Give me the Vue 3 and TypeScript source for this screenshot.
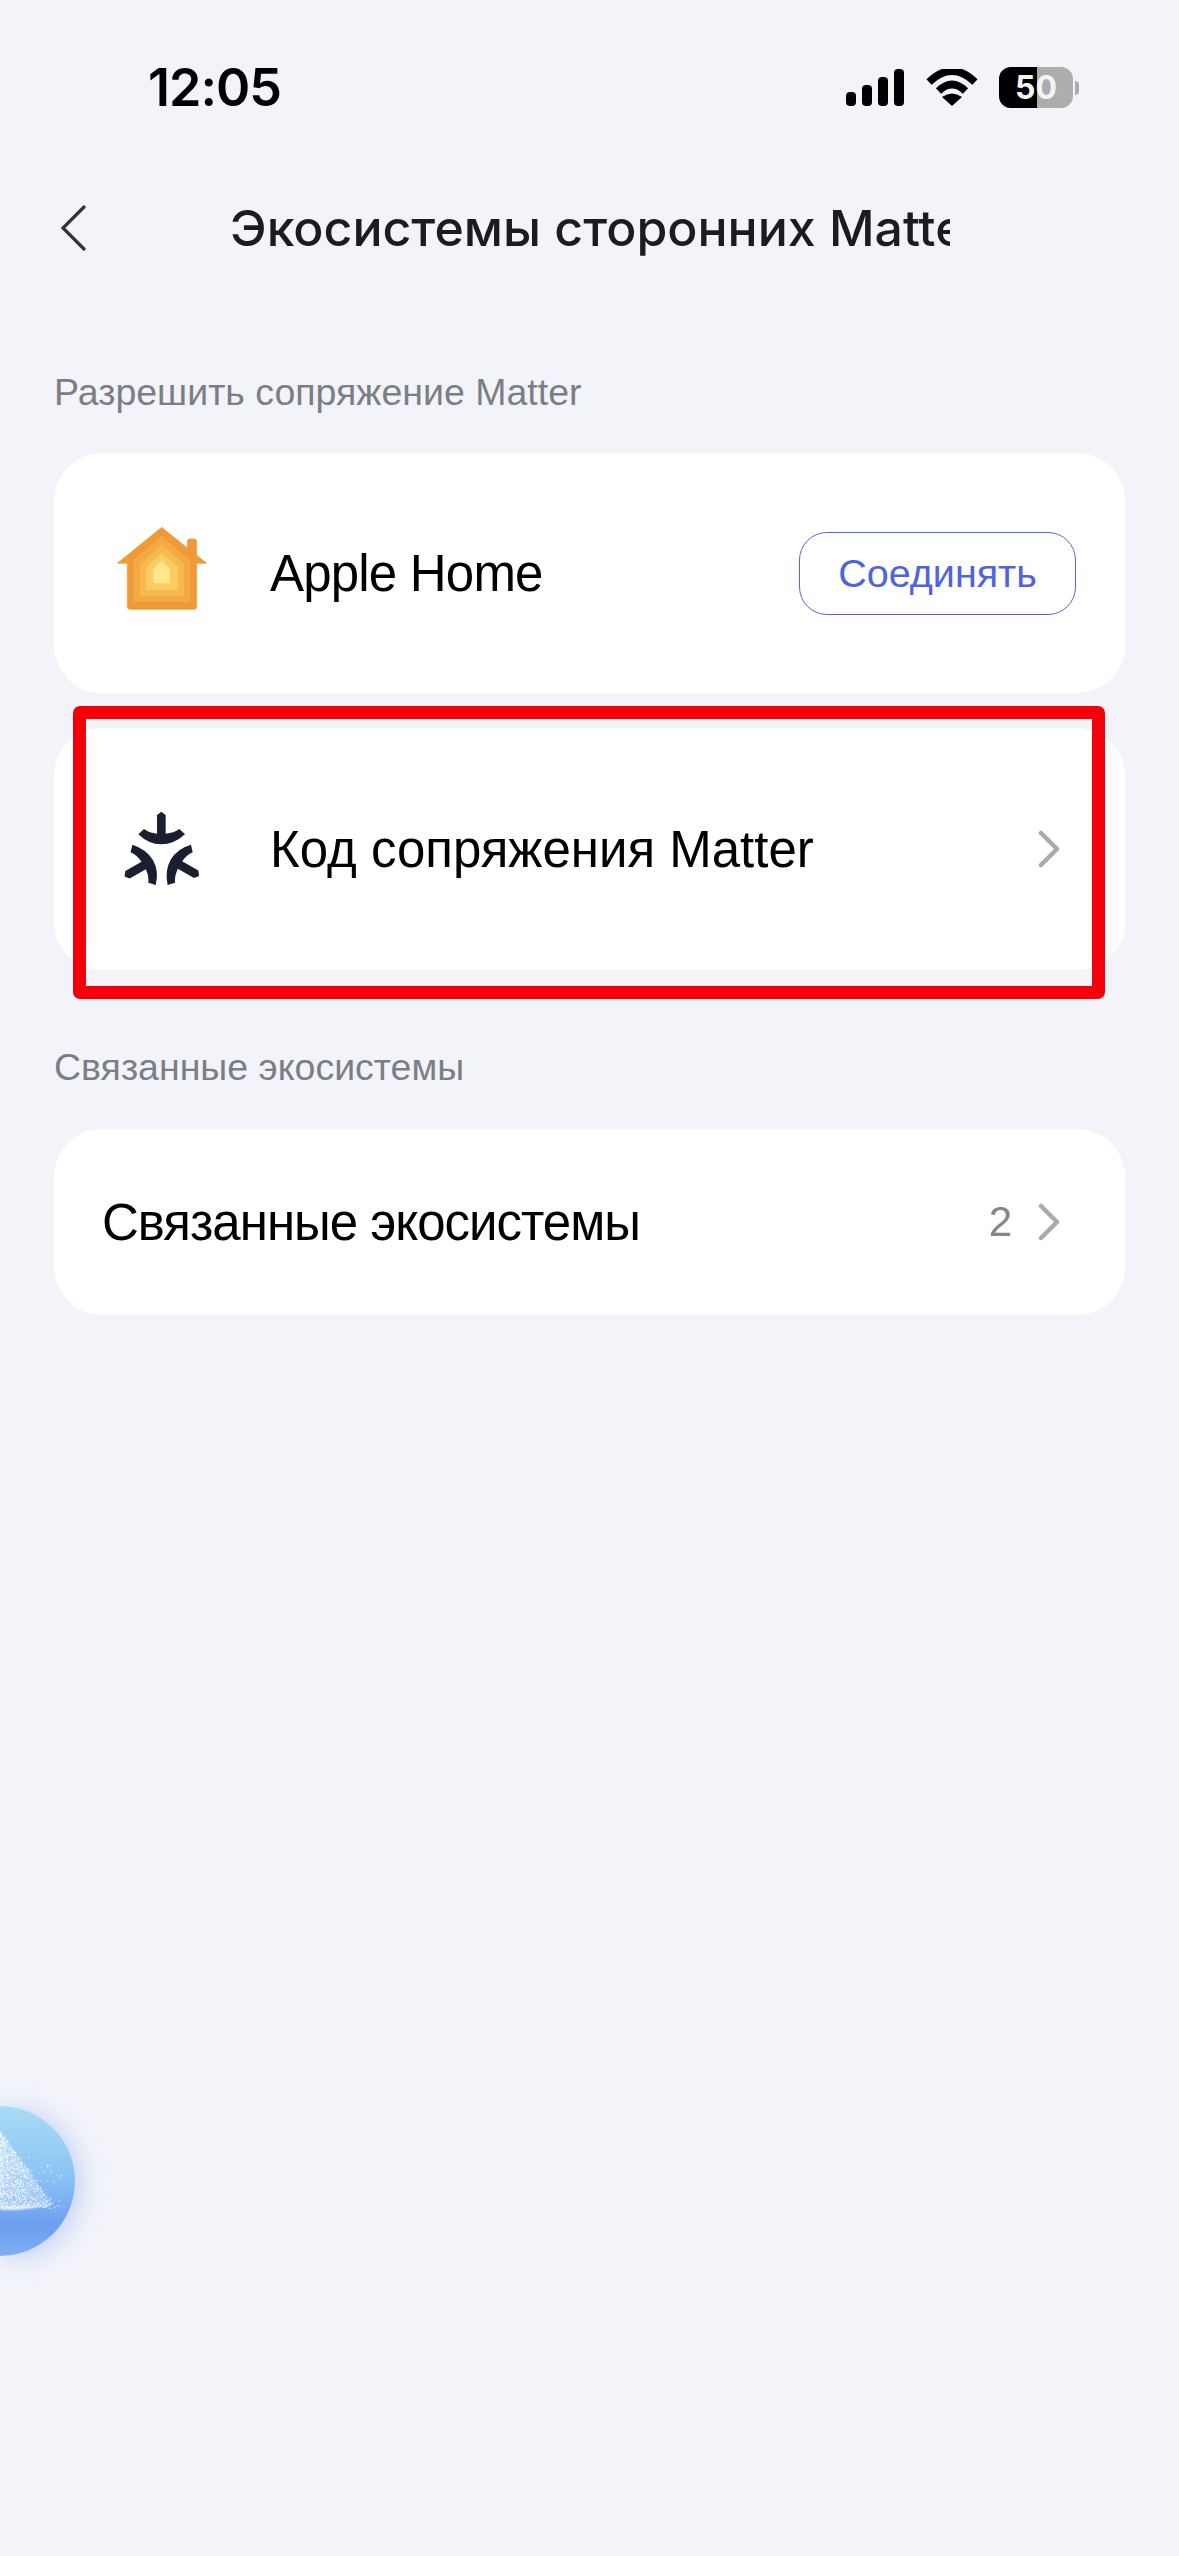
<template>
  <div class="page">
    <div class="status-bar">
      <span class="time">12:05</span>
      <div class="status-icons">
        <svg class="signal" width="58" height="37" viewBox="0 0 58 37">
          <rect x="0" y="23" width="10" height="14" rx="4" />
          <rect x="16" y="16" width="10" height="21" rx="4" />
          <rect x="32" y="8" width="10" height="29" rx="4" />
          <rect x="48" y="0" width="10" height="37" rx="4" />
        </svg>
        <svg class="wifi" width="52" height="37" viewBox="0 0 52 37">
          <path d="M3 13 Q26 -9 49 13" fill="none" stroke="#000" stroke-width="7.5" />
          <path d="M12.5 22 Q26 9 39.5 22" fill="none" stroke="#000" stroke-width="7.5" />
          <path d="M26 37 L16 28 Q26 21 36 28 Z" fill="#000" />
        </svg>
        <div class="battery">
          <div class="battery-body">
            <div class="battery-fill"></div>
            <span class="battery-text">50</span>
          </div>
          <div class="battery-nub"></div>
        </div>
      </div>
    </div>

    <div class="nav-bar">
      <svg class="back" width="26" height="46" viewBox="0 0 26 46">
        <path d="M24 2 L3 23 L24 44" fill="none" stroke="#33343a" stroke-width="3.2" stroke-linecap="round" />
      </svg>
      <div class="title">Экосистемы сторонних Matter</div>
    </div>

    <div class="section-label first">Разрешить сопряжение Matter</div>

    <div class="card row-tall">
      <svg class="row-icon home" width="150" height="110" viewBox="0 0 450 330">
        <path d="M215 52 L292 114 L292 94 Q292 87 299 87 L313 87 Q320 87 320 94 L320 136 L350 160 L320 160 L320 290 Q320 298 312 298 L120 298 Q112 298 112 290 L112 160 L82 160 Z" fill="#f09a37" stroke="#f09a37" stroke-width="2" stroke-linejoin="round" />
        <path d="M215 78 L300 150 L300 276 L130 276 L130 150 Z" fill="#f4a942" />
        <path d="M215 103 L282 162 L282 258 L150 258 L150 162 Z" fill="#f6b94e" />
        <path d="M215 128 L264 172 L264 240 L168 240 L168 172 Z" fill="#f9cc63" />
        <path d="M215 152 L240 176 L240 220 L190 220 L190 176 Z" fill="#fde788" />
      </svg>
      <span class="row-text apple">Apple Home</span>
      <button class="connect">Соединять</button>
    </div>

    <div class="card row-tall second">
      <svg class="row-icon matter" width="150" height="110" viewBox="0 0 450 330">
        <g v-for="angle in [0, 120, 240]" :key="angle" :transform="`rotate(${angle} 215 191)`">
          <path d="M201 72 L214 62 L227 72 L227 128 Q252 126 268 114 L285 130 Q252 160 214 160 Q176 160 145 130 L162 114 Q178 126 201 128 Z" fill="#1a1f30" />
        </g>
      </svg>
      <span class="row-text">Код сопряжения Matter</span>
      <svg class="chevron" width="22" height="38" viewBox="0 0 22 38">
        <path d="M3 3 L19 19 L3 35" fill="none" stroke="#a9a9ae" stroke-width="4.5" stroke-linecap="round" stroke-linejoin="round" />
      </svg>
      <div class="highlight"></div>
    </div>

    <div class="section-label">Связанные экосистемы</div>

    <div class="card row-short">
      <span class="row-text plain">Связанные экосистемы</span>
      <span class="count">2</span>
      <svg class="chevron" width="22" height="38" viewBox="0 0 22 38">
        <path d="M3 3 L19 19 L3 35" fill="none" stroke="#a9a9ae" stroke-width="4.5" stroke-linecap="round" stroke-linejoin="round" />
      </svg>
    </div>

    <div class="orb">
      <svg width="75" height="150" viewBox="0 0 75 150">
        <defs>
          <filter id="soft"><feGaussianBlur stdDeviation="1" /></filter>
        </defs>
        <path d="M0 24 L52 98 Q30 103 0 102 Z" fill="#fff" opacity="0.28" filter="url(#soft)" />
        <path d="M0 100 Q30 101 52 97 Q30 105 0 104 Z" fill="#fff" opacity="0.8" filter="url(#soft)" />
        <circle v-for="(d, i) in specks" :key="i" :cx="d.x" :cy="d.y" :r="d.r" fill="#fff" :opacity="d.o" />
      </svg>
    </div>
  </div>
</template>

<script setup lang="ts">
// seeded so the specks on the orb stay put between runs
let seed = 7;
const rnd = () => {
  seed = (seed * 16807) % 2147483647;
  return seed / 2147483647;
};

const inside = Array.from({ length: 1100 }, () => {
  const x = rnd() * rnd() * 54;
  const top = 24 + x * 1.42;
  const y = top + rnd() * (102 - top);
  return { x, y, r: 0.3 + rnd() * 0.5, o: 0.55 + rnd() * 0.45 };
});

// loose grains thrown off past the triangle's right edge
const loose = Array.from({ length: 110 }, () => {
  const x = 12 + rnd() * 52;
  const y = 34 + x * 0.5 + rnd() * 46;
  return { x, y, r: 0.3 + rnd() * 0.5, o: 0.4 + rnd() * 0.5 };
});

const specks = [...inside, ...loose];
</script>

<style scoped>
.page {
  position: relative;
  width: 1179px;
  height: 2556px;
  overflow: hidden;
  box-sizing: border-box;
  padding: 0 54px;
  background: #f2f4f9;
  font-family: "Liberation Sans", Arial, sans-serif;
  color: #000;
}

.status-bar {
  display: flex;
  align-items: center;
  justify-content: space-between;
  height: 41px;
  padding: 67px 46px 0 94px;
}

.time {
  font-size: 52px;
  font-weight: 600;
  font-family: Inter, sans-serif;
  letter-spacing: -1px;
  color: #000;
}

.status-icons {
  display: flex;
  align-items: center;
}

.wifi {
  margin-left: 22px;
}

.battery {
  display: flex;
  align-items: center;
  margin-left: 21px;
}

.battery-body {
  position: relative;
  display: flex;
  align-items: center;
  justify-content: center;
  width: 74px;
  height: 41px;
  border-radius: 12px;
  overflow: hidden;
  background: #adadad;
}

.battery-fill {
  position: absolute;
  left: 0;
  top: 0;
  bottom: 0;
  width: 38px;
  background: #000;
}

.battery-text {
  position: relative;
  font-family: Inter, sans-serif;
  font-size: 32px;
  font-weight: 700;
  color: #f4f4f4;
}

.battery-nub {
  width: 4px;
  height: 14px;
  margin-left: 2px;
  border-radius: 0 4px 4px 0;
  background: #adadad;
}

.nav-bar {
  display: flex;
  align-items: center;
  height: 60px;
  margin-top: 90px;
  padding-left: 6px;
}

.title {
  width: 720px;
  margin-left: 144px;
  overflow: hidden;
  white-space: nowrap;
  font-family: Inter, sans-serif;
  font-size: 50px;
  font-weight: 500;
  color: #1b1c20;
}

.section-label {
  height: 40px;
  margin-top: 77px;
  font-size: 37.5px;
  line-height: 40px;
  color: #7d7e85;
}

.section-label.first {
  margin-top: 114px;
}

.card {
  display: flex;
  align-items: center;
  box-sizing: border-box;
  margin-top: 41px;
  border-radius: 48px;
  background: #fff;
}

.row-tall {
  position: relative;
  height: 240px;
  padding-left: 36px;
}

.second {
  height: 242px;
  margin-top: 35px;
}

.row-short {
  height: 186px;
  margin-top: 42px;
  padding-left: 48px;
}

.row-icon {
  flex: none;
}

.home {
  margin-bottom: 16px;
}

.matter {
  margin-bottom: 7px;
}

.row-text {
  flex: 1;
  margin-left: 30px;
  font-size: 51px;
}

.row-text.apple {
  letter-spacing: -0.8px;
}

.row-text.plain {
  margin-left: 0;
  letter-spacing: -1px;
}

.connect {
  width: 277px;
  height: 83px;
  margin-right: 49px;
  padding: 0;
  border: 1.5px solid #5468d4;
  border-radius: 28px;
  background: #fff;
  font-family: "Liberation Sans", Arial, sans-serif;
  font-size: 39.5px;
  color: #4e63dd;
}

.chevron {
  margin-right: 65px;
  flex: none;
}

.count {
  margin-right: 26px;
  font-size: 42px;
  color: #85868c;
}

.highlight {
  position: absolute;
  top: -22px;
  left: 19px;
  width: 1032px;
  height: 293px;
  box-sizing: border-box;
  border: 13px solid #f5000a;
  border-radius: 7px;
  pointer-events: none;
}

.orb {
  position: absolute;
  left: 0;
  top: 2106px;
  width: 75px;
  height: 150px;
  border-radius: 0 75px 75px 0;
  background: linear-gradient(180deg, #aadcf6 0%, #8cc4f4 45%, #6d9ef0 80%, #7fb0f4 100%);
  box-shadow: 5px 3px 26px rgba(120, 150, 240, 0.4);
}

.orb svg {
  display: block;
}
</style>

<style>
html,
body {
  margin: 0;
  background: #f2f4f9;
}
</style>
